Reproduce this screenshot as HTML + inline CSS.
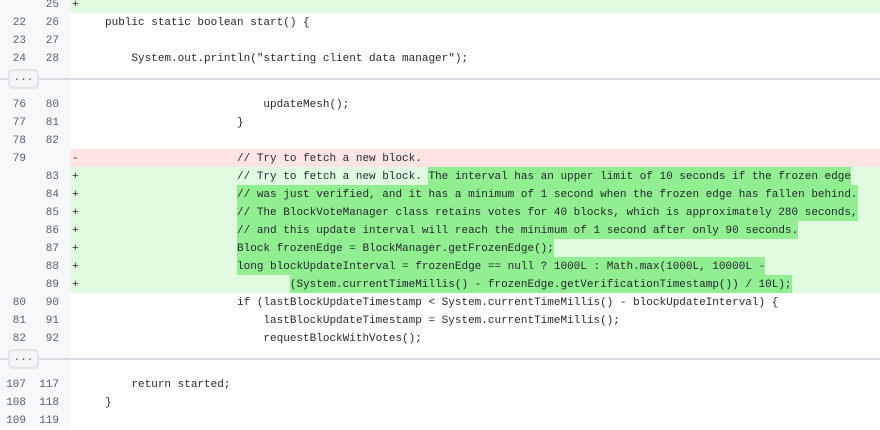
<!DOCTYPE html>
<html><head><meta charset="utf-8"><style>
body{margin:0;width:880px;height:420px;overflow:hidden;background:#fff;font-family:"Liberation Mono",monospace;font-size:11px;color:#24292f;position:relative}
.r{position:absolute;left:0;width:880px;height:18px;line-height:18px;white-space:pre}
.g{position:absolute;left:0;top:0;width:70px;height:100%;background:#f6f8fa}
.n1,.n2{position:absolute;top:1px;width:30px;text-align:right;color:#57606a}
.n1{left:-4px}.n2{left:29px}
.c{position:absolute;left:72px;top:1px}
.add{background:#e0fbe0}
.del{background:#ffe4e4}
.h{background:#91ee91;display:inline-block;height:18px;vertical-align:top;margin-top:-1px;line-height:20px}
.sep{position:absolute;left:0;width:880px;height:28px}
.sep .g{height:28px}
.sep .ln{position:absolute;left:0;top:11px;width:880px;height:2px;background:#d8dde3}
.sep .b{position:absolute;left:8px;top:2px;width:31px;height:20px;border:2px solid #e2e6ea;border-radius:5px;background:#f3f5f7;text-align:center;line-height:14px;font-size:11px;color:#57606a;box-sizing:border-box}
</style></head><body>
<div class="r add" style="top:-5px"><div class="g"></div><span class="n2">25</span><span class="c">+</span></div>
<div class="r" style="top:13px"><div class="g"></div><span class="n1">22</span><span class="n2">26</span><span class="c">     public static boolean start() {</span></div>
<div class="r" style="top:31px"><div class="g"></div><span class="n1">23</span><span class="n2">27</span></div>
<div class="r" style="top:49px"><div class="g"></div><span class="n1">24</span><span class="n2">28</span><span class="c">         System.out.println("starting client data manager");</span></div>
<div class="sep" style="top:67px"><div class="g"></div><div class="ln"></div><div class="b">...</div></div>
<div class="r" style="top:95px"><div class="g"></div><span class="n1">76</span><span class="n2">80</span><span class="c">                             updateMesh();</span></div>
<div class="r" style="top:113px"><div class="g"></div><span class="n1">77</span><span class="n2">81</span><span class="c">                         }</span></div>
<div class="r" style="top:131px"><div class="g"></div><span class="n1">78</span><span class="n2">82</span></div>
<div class="r del" style="top:149px"><div class="g"></div><span class="n1">79</span><span class="c">-                        // Try to fetch a new block.</span></div>
<div class="r add" style="top:167px"><div class="g"></div><span class="n2">83</span><span class="c">+                        // Try to fetch a new block. <span class="h">The interval has an upper limit of 10 seconds if the frozen edge</span></span></div>
<div class="r add" style="top:185px"><div class="g"></div><span class="n2">84</span><span class="c">+                        <span class="h">// was just verified, and it has a minimum of 1 second when the frozen edge has fallen behind.</span></span></div>
<div class="r add" style="top:203px"><div class="g"></div><span class="n2">85</span><span class="c">+                        <span class="h">// The BlockVoteManager class retains votes for 40 blocks, which is approximately 280 seconds,</span></span></div>
<div class="r add" style="top:221px"><div class="g"></div><span class="n2">86</span><span class="c">+                        <span class="h">// and this update interval will reach the minimum of 1 second after only 90 seconds.</span></span></div>
<div class="r add" style="top:239px"><div class="g"></div><span class="n2">87</span><span class="c">+                        <span class="h">Block frozenEdge = BlockManager.getFrozenEdge();</span></span></div>
<div class="r add" style="top:257px"><div class="g"></div><span class="n2">88</span><span class="c">+                        <span class="h">long blockUpdateInterval = frozenEdge == null ? 1000L : Math.max(1000L, 10000L -</span></span></div>
<div class="r add" style="top:275px"><div class="g"></div><span class="n2">89</span><span class="c">+                                <span class="h">(System.currentTimeMillis() - frozenEdge.getVerificationTimestamp()) / 10L);</span></span></div>
<div class="r" style="top:293px"><div class="g"></div><span class="n1">80</span><span class="n2">90</span><span class="c">                         if (lastBlockUpdateTimestamp &lt; System.currentTimeMillis() - blockUpdateInterval) {</span></div>
<div class="r" style="top:311px"><div class="g"></div><span class="n1">81</span><span class="n2">91</span><span class="c">                             lastBlockUpdateTimestamp = System.currentTimeMillis();</span></div>
<div class="r" style="top:329px"><div class="g"></div><span class="n1">82</span><span class="n2">92</span><span class="c">                             requestBlockWithVotes();</span></div>
<div class="sep" style="top:347px"><div class="g"></div><div class="ln"></div><div class="b">...</div></div>
<div class="r" style="top:375px"><div class="g"></div><span class="n1">107</span><span class="n2">117</span><span class="c">         return started;</span></div>
<div class="r" style="top:393px"><div class="g"></div><span class="n1">108</span><span class="n2">118</span><span class="c">     }</span></div>
<div class="r" style="top:411px"><div class="g"></div><span class="n1">109</span><span class="n2">119</span></div>
</body></html>
